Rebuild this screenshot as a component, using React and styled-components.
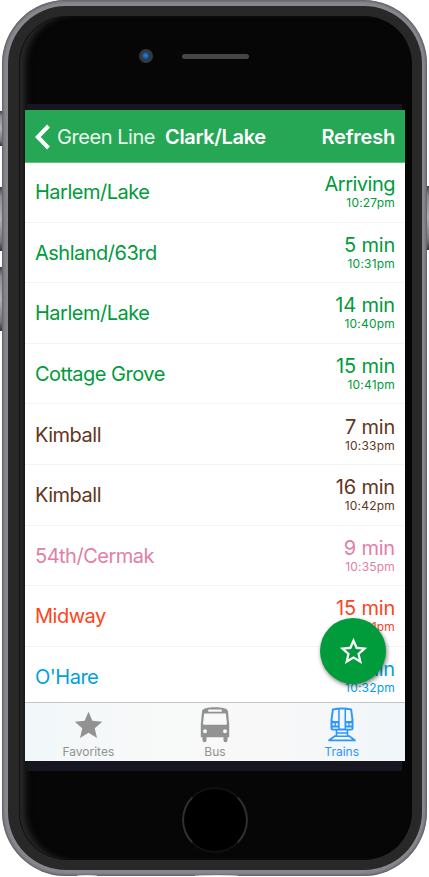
import React from 'react';
import styled, { createGlobalStyle } from 'styled-components';
import { MdStar, MdStarOutline } from 'react-icons/md';

const GREEN = '#009b3a';
const BROWN = '#62361b';
const PINK = '#e27ea6';
const ORANGE = '#f9461c';
const BLUE = '#00a1de';

const ARRIVALS = [
  { id: 1, name: 'Harlem/Lake', eta: 'Arriving', time: '10:27pm', color: GREEN },
  { id: 2, name: 'Ashland/63rd', eta: '5 min', time: '10:31pm', color: GREEN },
  { id: 3, name: 'Harlem/Lake', eta: '14 min', time: '10:40pm', color: GREEN },
  { id: 4, name: 'Cottage Grove', eta: '15 min', time: '10:41pm', color: GREEN },
  { id: 5, name: 'Kimball', eta: '7 min', time: '10:33pm', color: BROWN },
  { id: 6, name: 'Kimball', eta: '16 min', time: '10:42pm', color: BROWN },
  { id: 7, name: '54th/Cermak', eta: '9 min', time: '10:35pm', color: PINK },
  { id: 8, name: 'Midway', eta: '15 min', time: '10:41pm', color: ORANGE },
  { id: 9, name: "O'Hare", eta: '6 min', time: '10:32pm', color: BLUE },
];

const App = () => (
  <Page>
    <GlobalStyle />
    <SideButton $top={111} $height={35} />
    <SideButton $top={187} $height={64} />
    <SideButton $top={267} $height={64} />
    <SideButton $top={186} $height={64} $right />
    <Shell>
      <Bezel>
        <Face>
          <TopPanel>
            <Camera />
            <Speaker />
          </TopPanel>
          <Strip $height={6} />
          <Screen>
            <NavBar />
            <List>
              {ARRIVALS.map(arrival => (
                <Arrival key={arrival.id} {...arrival} />
              ))}
            </List>
            <TabBar />
            <FavoriteButton aria-label="Add to favorites">
              <MdStarOutline size={33} />
            </FavoriteButton>
          </Screen>
          <Strip $height={10} />
          <BottomPanel>
            <HomeButton />
          </BottomPanel>
        </Face>
      </Bezel>
      <Antenna $left={75} $width={20} />
      <Antenna $left={193} $width={43} />
    </Shell>
  </Page>
);

const NavBar = () => (
  <Nav>
    <Back>
      <svg width="16" height="26" viewBox="0 0 16 26" fill="none">
        <path d="M13.500 2 2.800 13l10.700 11" stroke="#fff" strokeWidth="4" />
      </svg>
      <BackLabel>Green Line</BackLabel>
    </Back>
    <Title>Clark/Lake</Title>
    <Refresh>Refresh</Refresh>
  </Nav>
);

const Arrival = ({ name, eta, time, color }) => (
  <Row $color={color}>
    <Destination>{name}</Destination>
    <Times>
      <Eta $tight={eta === 'Arriving'}>{eta}</Eta>
      <Clock>{time}</Clock>
    </Times>
  </Row>
);

const TabBar = () => (
  <Tabs>
    <Tab>
      <TabIcon>
        <MdStar size={33} />
      </TabIcon>
      Favorites
    </Tab>
    <Tab>
      <TabIcon>
        <BusIcon />
      </TabIcon>
      Bus
    </Tab>
    <Tab $active>
      <TabIcon>
        <TrainIcon />
      </TabIcon>
      Trains
    </Tab>
  </Tabs>
);

const BusIcon = () => (
  <svg width="30" height="36" viewBox="0 0 30 36" fill="currentColor">
    <path
      fillRule="evenodd"
      d="M2 4.500C2 1.500 8 .3 15 .3s13 1.200 13 4.200l1.200 13v12.700H27.500v3a2 2 0 0 1-4 0v-3h-17v3a2 2 0 0 1-4 0v-3H.8V17.500zM9 2.600q-1 0-1 1.100t1 1.100h12q1 0 1-1.100t-1-1.100zM4.200 6.500 3 16.500q0 1.200 1.200 1.200h21.600q1.200 0 1.200-1.200l-1.200-10zM5 22.300a2 2 0 1 0 0 4 2 2 0 0 0 0-4m20 0a2 2 0 1 0 0 4 2 2 0 0 0 0-4"
    />
  </svg>
);

const TrainIcon = () => (
  <svg width="28" height="36" viewBox="0 0 28 36" fill="currentColor">
    {/* car body with two windows, the door and the lamps cut out */}
    <path
      fillRule="evenodd"
      d="M4 1.800Q14-.8 24 1.800L25.500 13v8q0 2.500-2.500 2.500H5Q2.500 23.500 2.500 21v-8zM5.700 3.300 4.500 13q0 1 1 1h4.700V2.700zM11.700 2.500v19h4.800v-19zM18 2.700V14h4.500q1 0 1-1L22.300 3.300zM4.600 16.200v2.200h2v-2.200zm3.300 0v2.200h2v-2.200zm10.400 0v2.200h2v-2.200zm3.300 0v2.200h2v-2.200zM4.600 20.600v1.200h5.600v-1.200zm13.400 0v1.200h5.500v-1.200z"
    />
    <path
      d="M8.500 22.500v6.500M19.500 22.500v6.500M9 26h10M6 29.200h16M7.500 28.500 1.500 33M20.500 28.500l6 4.500M.3 33.400h27.400"
      fill="none"
      stroke="currentColor"
      strokeWidth="1.600"
    />
  </svg>
);

const GlobalStyle = createGlobalStyle`
  * {
    box-sizing: border-box;
  }

  body {
    margin: 0;
    background: #fff;
    font-family: Inter, Roboto, sans-serif;
  }

  button {
    font-family: inherit;
  }

  svg {
    display: block;
  }
`;

const Page = styled.div`
  position: relative;
  width: 429px;
  height: 877px;
  overflow: hidden;
  padding: 0 2px;
`;

const SideButton = styled.div`
  position: absolute;
  top: ${p => p.$top}px;
  ${p => (p.$right ? 'right: 0;' : 'left: 0;')}
  width: 3px;
  height: ${p => p.$height}px;
  background: linear-gradient(#444, #8d8d8d 15%, #b2b2b2 50%, #777 85%, #333);
`;

const Shell = styled.div`
  position: relative;
  height: 876px;
  padding: 6px 5px 6px 6px;
  border-radius: 64px;
  background: #88888f;
  box-shadow: inset 0 0 3px 1px #55555a;
  overflow: hidden;
`;

const Bezel = styled.div`
  height: 864px;
  padding: 10px 10px 10px 11px;
  border-radius: 58px;
  background: #282828;
`;

const Face = styled.div`
  display: flex;
  flex-direction: column;
  height: 844px;
  padding: 0 7px 0 6px;
  border-radius: 48px;
  background: #060606;
  box-shadow: inset 1px 0 0 #111, inset 9px 0 7px -3px #2b2b2b;
`;

const TopPanel = styled.div`
  display: flex;
  align-items: center;
  gap: 29px;
  height: 88px;
  padding: 0 0 8px 114px;
`;

const Camera = styled.div`
  width: 14px;
  height: 14px;
  border: 3px solid #38383a;
  border-radius: 50%;
  background: radial-gradient(circle at 45% 45%, #2f86d0 0, #1b5794 45%, #0f2c50 80%);
`;

const Speaker = styled.div`
  width: 67px;
  height: 5px;
  border-radius: 3px;
  background: #454545;
`;

const Strip = styled.div`
  height: ${p => p.$height}px;
  margin: 0 3px 0 2px;
  background: #171620;
`;

const Screen = styled.main`
  position: relative;
  display: flex;
  flex-direction: column;
  width: 380px;
  height: 651px;
  background: #fff;
  overflow: hidden;
`;

const Nav = styled.header`
  display: flex;
  flex: none;
  align-items: center;
  height: 53px;
  padding: 1px 10px 0;
  border-bottom: 1px solid #68bd83;
  background: #26a756;
  color: #fff;
  font-size: 20px;
`;

const Back = styled.div`
  display: flex;
  align-items: center;
  gap: 6px;
  width: 130px;
`;

const BackLabel = styled.span`
  color: #e9f6ee;
  letter-spacing: -0.45px;
  white-space: nowrap;
`;

const Title = styled.h1`
  margin: 0;
  font-size: 20px;
  font-weight: 600;
  letter-spacing: -0.35px;
`;

const Refresh = styled.div`
  margin-left: auto;
  font-weight: 600;
  letter-spacing: -0.2px;
`;

const List = styled.ul`
  flex: 1;
  min-height: 0;
  margin: -1px 0 0;
  padding: 0;
  list-style: none;
  overflow: hidden;
`;

const Row = styled.li`
  display: flex;
  align-items: center;
  justify-content: space-between;
  height: 60.6px;
  padding: 0 10px;
  border-bottom: 1px solid #f3f3f4;
  color: ${p => p.$color};
`;

const Destination = styled.span`
  padding-top: 1px;
  font-size: 20px;
  letter-spacing: -0.5px;
`;

const Times = styled.div`
  display: flex;
  flex-direction: column;
  align-items: flex-end;
`;

const Eta = styled.span`
  margin-top: -1px;
  font-size: 20px;
  line-height: 24px;
  letter-spacing: ${p => (p.$tight ? '-0.5px' : '-0.2px')};
`;

const Clock = styled.span`
  font-size: 12px;
  line-height: 14px;
  letter-spacing: 0.2px;
`;

const Tabs = styled.nav`
  display: flex;
  flex: none;
  height: 59px;
  border-top: 1px solid #c2c4c6;
  background: linear-gradient(90deg, #f1f7f9, #f8f9f9 35%, #f8f8f8 65%, #f0f6fa);
`;

const Tab = styled.div`
  display: flex;
  flex: 1;
  flex-direction: column;
  align-items: center;
  padding-top: 4px;
  color: ${p => (p.$active ? '#2c95ff' : '#929292')};
  font-size: 12px;
  line-height: 18px;
`;

const TabIcon = styled.div`
  display: flex;
  align-items: center;
  height: 37px;
`;

const FavoriteButton = styled.button`
  position: absolute;
  right: 19px;
  bottom: 77px;
  display: grid;
  place-items: center;
  width: 66px;
  height: 66px;
  padding: 0;
  border: 0;
  border-radius: 50%;
  background: ${GREEN};
  color: #fff;
  box-shadow: 1px 2px 4px rgba(0, 0, 0, 0.5);
`;

const BottomPanel = styled.div`
  display: flex;
  justify-content: center;
  height: 89px;
  padding-top: 16px;
`;

const HomeButton = styled.div`
  width: 66px;
  height: 66px;
  border: 2px solid;
  border-color: #111 #303030 #111 #303030;
  border-radius: 50%;
  background: #000;
`;

const Antenna = styled.div`
  position: absolute;
  bottom: 0;
  left: ${p => p.$left}px;
  width: ${p => p.$width}px;
  height: 1px;
  border-radius: 50% 50% 0 0;
  background: #e8e8e8;
`;

export default App;
